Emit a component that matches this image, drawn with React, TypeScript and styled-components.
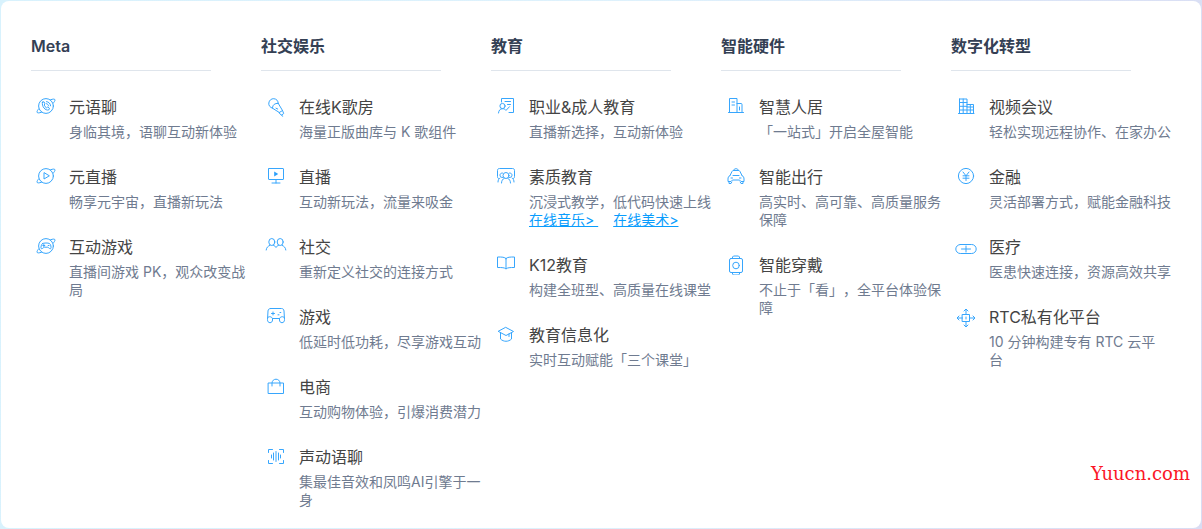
import React from "react";
import styled, { createGlobalStyle } from "styled-components";

const GlobalStyle = createGlobalStyle`
  *, *::before, *::after { box-sizing: border-box; }
  body {
    margin: 0;
    font-family: Inter, "Noto Sans CJK SC", sans-serif;
    text-spacing-trim: space-all;
    background: linear-gradient(100deg, #d8f2fd 0%, #def1fc 50%, #d9dcf3 100%);
  }
`;

const Page = styled.main`
  min-height: 100vh;
  padding: 1px;
  display: flex;
`;

const Panel = styled.nav`
  position: relative;
  flex: 1;
  display: grid;
  grid-template-columns: repeat(5, minmax(0, 230px));
  align-items: start;
  padding: 33px 20px 19px 30px;
  background: #fff;
  border-radius: 8px;
`;

const Column = styled.section`
  min-width: 0;
`;

const Heading = styled.h2`
  width: 180px;
  margin: 0 0 24px;
  padding-bottom: 12px;
  border-bottom: 1px solid #dfe5ec;
  color: #344054;
  font-size: 16px;
  line-height: 24px;
  font-weight: 600;
`;

const List = styled.ul`
  display: flex;
  flex-direction: column;
  gap: 24px;
  margin: 0;
  padding: 0 0 0 4px;
  list-style: none;
`;

const Item = styled.li`
  display: flex;
  gap: 12px;
`;

const Icon = styled.svg`
  flex: none;
  width: 22px;
  height: 22px;
  fill: none;
  stroke: #37a6fd;
  stroke-width: 1;
  stroke-linecap: round;
  stroke-linejoin: round;
`;

const Body = styled.div`
  min-width: 0;
  white-space: nowrap;
`;

const Title = styled.h3`
  margin: 0 0 4px;
  color: #444;
  font-size: 16px;
  line-height: 24px;
  font-weight: 400;
`;

const Description = styled.p`
  margin: 0;
  color: #6f7b90;
  font-size: 14px;
  line-height: 18px;
`;

const Links = styled.div`
  display: flex;
  gap: 15px;
  font-size: 14px;
  line-height: 18px;
`;

const TextLink = styled.a`
  color: #099dfd;
  white-space: pre;
  text-decoration: underline;
`;

const Watermark = styled.span`
  position: absolute;
  right: 11px;
  bottom: 42px;
  color: #fb1626;
  font-family: "DejaVu Serif", serif;
  font-size: 18px;
  line-height: 24px;
`;

const Orbit = () => (
  <>
    <circle cx="11" cy="11" r="7.4" />
    <path d="M15.5 4.8C18 3.8 20 3.8 20 5c0 .9-.7 2-2 3.300M6.500 17.200C4 18.200 2 18.200 2 17c0-.9.6-2 1.800-3.200" />
  </>
);

const icons: Record<string, React.ReactNode> = {
  voice: (
    <>
      <Orbit />
      <path d="M7.5 7.2 9 6.8l1 2.1-.9 1.1c.4 1.2 1.2 2.1 2.4 2.8l1.2-.8 1.8 1.3-.7 1.6c-3.4 1-7.5-3.4-6.3-7.7zM11.5 8.7c1.1.2 1.9 1 2.1 2.2M11.5 6.6c2.3.2 3.9 1.9 4.1 4.2" />
    </>
  ),
  metaLive: (
    <>
      <Orbit />
      <path d="M9 8v6l5-3z" />
    </>
  ),
  metaGame: (
    <>
      <Orbit />
      <path d="M7.5 8.5c1.500-.7 5.500-.7 7 0 1.200.7 2 4 1.300 5-.8 1-2-.9-3-1.300H9.200c-1 .4-2.200 2.300-3 1.300-.7-1 .1-4.300 1.300-5zM7.800 10.500h2M8.800 9.500v2M13.200 10.500h.8" />
    </>
  ),
  karaoke: (
    <>
      <path d="M7.5 13.200C5 12.500 3.500 10.500 3.800 8c.4-2.700 2.600-4.500 5-4.300 2.700.2 4.500 2.200 4.400 4.600" />
      <path d="m13.200 8.300 4.300 7.200M7.500 13.200l6.800 4.300M7.500 12.500c.2-2.800 2.200-4.200 5.500-4.200M11 13.200l1.700.8M14.300 17.500l3.200-2 1.200 3-2 1.500zM16.700 20l.8 1.300" />
    </>
  ),
  live: (
    <>
      <rect x="3.500" y="3.500" width="15" height="11" rx=".5" />
      <path d="M11 14.500v3.500M7 18h8" />
      <path d="M9.200 6.500v5l4-2.500z" fill="#2b9ffb" stroke="none" />
    </>
  ),
  social: (
    <>
      <ellipse cx="6.800" cy="7" rx="3" ry="3.500" />
      <ellipse cx="15.200" cy="7" rx="3" ry="3.500" />
      <path d="M1.200 15c.2-2.500 1.700-3.800 3.800-4.700M8.500 10.300c1.100.4 1.900 1.100 2.500 2.200.6-1.100 1.400-1.800 2.500-2.200M17 10.300c2.100.9 3.600 2.200 3.800 4.700" />
    </>
  ),
  game: (
    <>
      <path d="M5.500 3.500h11c1.500 0 2.400 1 2.500 2.500l.5 8.500c.1 2-1 3.200-2.500 3.200s-2.500-1.100-2.500-2.700v-1.500h-7V15c0 1.600-1 2.700-2.500 2.700s-2.600-1.200-2.500-3.200L3 6c.1-1.500 1-2.500 2.500-2.500z" />
      <path d="M2.800 12.500c.7-1.300 4-1.300 4.700 1M14.500 13.500c.7-2.300 4-2.300 4.700-1M6.500 8.500h3M8 7v3M13 9.800h1M15 7.500h.8" />
    </>
  ),
  shop: (
    <>
      <path d="M3.500 8h15v10.500h-15z" />
      <path d="M7 11V8c.2-2.400 1.900-3.800 4-3.800S14.800 5.600 15 8v3" />
    </>
  ),
  sound: (
    <path d="M3.500 7.500v-3h4M14.500 4.500h4v3M18.500 15.500v3h-4M7.500 18.500h-4v-3M6.500 10v3M8.500 8v7M11 6.500v10M13.500 8v7M15.500 10v3" />
  ),
  career: (
    <>
      <path d="M6.500 7V3.500h12v14H14M10 6.500h5.500M12.500 9.500h3" />
      <circle cx="7.500" cy="11" r="2.600" />
      <path d="M3.500 18c.2-2.500 1.600-4.300 4-4.300 1.700 0 2.700.6 3.500 1.700l3.500-3.700" />
    </>
  ),
  quality: (
    <>
      <path d="M3.500 13.500c-.8-.3-1-1-1-2V5.500c0-1.300.7-2 2-2h13c1.300 0 2 .7 2 2v6c0 1-.2 1.700-1 2" />
      <circle cx="11" cy="10.500" r="3" />
      <path d="M7.800 12.500c-1.500.2-2.800-.8-2.800-2.300 0-1.400 1-2.300 2.500-2.200M14.200 12.500c1.500.2 2.800-.8 2.800-2.300 0-1.400-1-2.300-2.500-2.200M6.500 18c0-2.200 1-3.800 2.800-4.800M15.500 18c0-2.200-1-3.800-2.800-4.800M3 17c0-1.800.6-3.200 2-4M19 17c0-1.800-.6-3.200-2-4" />
    </>
  ),
  book: (
    <path d="M11 5.500C9.500 4 7 4 2.500 4v10.500c4.500 0 7 0 8.500 1.500 1.500-1.500 4-1.500 8.500-1.500V4C15 4 12.500 4 11 5.500zM11 5.500v10" />
  ),
  cap: (
    <path d="m11 4.500 7.500 4-7.500 4-7.500-4zM5.500 9.800v6.200c3.200 3 7.800 3 11 0V9.800M14 11v2.500" />
  ),
  home: (
    <path d="M3.500 17.500h15M4.500 17.500v-14h7.500v14M12 8.500h4c.7 0 1 .3 1 1v8M7 7h2.500M7 10h2.500M14.500 12v3" />
  ),
  car: (
    <path d="M8.500 5.500c0-2.500 5-2.500 5 0M5 10.500l2-4c.4-.7.8-1 1.500-1h5c.7 0 1.100.3 1.500 1l2 4M8 10.500h6M5 10.500c-1.500.8-2 2-2 3.500v2.500h3l1.500-1.500h7l1.500 1.500h3V14c0-1.500-.5-2.700-2-3.500M4 16.500v2h2l.8-1.500M18 16.500v2h-2l-.8-1.500M6 13h1.500M14.500 13H16" />
  ),
  watch: (
    <>
      <rect x="4.500" y="5.500" width="13" height="14" rx="1.500" />
      <circle cx="11" cy="12.500" r="3.300" />
      <path d="M7.500 5.500V4l1-1h5l1 1v1.500M7.500 19.500V21l1 1h5l1-1v-1.500" />
    </>
  ),
  meeting: (
    <path d="M4.500 4h7.500v14.500M4.500 4v14.500h14V9.500H12M4.500 7.500H12M4.500 11.300H12M4.500 15h14M8.200 4v14.500M12 12h6.500M15.300 9.500v9M3.500 18.500h15.500" />
  ),
  finance: (
    <>
      <circle cx="11" cy="11" r="7.600" />
      <path d="m8 7 3 3.800L14 7M11 10.800v4.700M8 10.800h6M8 13.200h6" />
    </>
  ),
  medical: (
    <>
      <rect x=".8" y="9.500" width="20.400" height="9" rx="4.500" />
      <path d="M11 11v6M6.500 14h9" />
    </>
  ),
  platform: (
    <>
      <rect x="7.500" y="9.500" width="7" height="7" />
      <path d="M11 9.500v-5M9 6l2-2 2 2M11 16.500v5M9 20l2 2 2-2M7.500 13h-5M4 11l-2 2 2 2M14.500 13h5M18 11l2 2-2 2M11 12v2" />
    </>
  ),
};

type Entry = { icon: string; title: string; lines: string[]; links?: string[] };

const columns: { heading: string; items: Entry[] }[] = [
  {
    heading: "Meta",
    items: [
      { icon: "voice", title: "元语聊", lines: ["身临其境，语聊互动新体验"] },
      { icon: "metaLive", title: "元直播", lines: ["畅享元宇宙，直播新玩法"] },
      { icon: "metaGame", title: "互动游戏", lines: ["直播间游戏 PK，观众改变战", "局"] },
    ],
  },
  {
    heading: "社交娱乐",
    items: [
      { icon: "karaoke", title: "在线K歌房", lines: ["海量正版曲库与 K 歌组件"] },
      { icon: "live", title: "直播", lines: ["互动新玩法，流量来吸金"] },
      { icon: "social", title: "社交", lines: ["重新定义社交的连接方式"] },
      { icon: "game", title: "游戏", lines: ["低延时低功耗，尽享游戏互动"] },
      { icon: "shop", title: "电商", lines: ["互动购物体验，引爆消费潜力"] },
      { icon: "sound", title: "声动语聊", lines: ["集最佳音效和凤鸣AI引擎于一", "身"] },
    ],
  },
  {
    heading: "教育",
    items: [
      { icon: "career", title: "职业&成人教育", lines: ["直播新选择，互动新体验"] },
      {
        icon: "quality",
        title: "素质教育",
        lines: ["沉浸式教学，低代码快速上线"],
        links: ["在线音乐> ", "在线美术>"],
      },
      { icon: "book", title: "K12教育", lines: ["构建全班型、高质量在线课堂"] },
      { icon: "cap", title: "教育信息化", lines: ["实时互动赋能「三个课堂」"] },
    ],
  },
  {
    heading: "智能硬件",
    items: [
      { icon: "home", title: "智慧人居", lines: ["「一站式」开启全屋智能"] },
      { icon: "car", title: "智能出行", lines: ["高实时、高可靠、高质量服务", "保障"] },
      { icon: "watch", title: "智能穿戴", lines: ["不止于「看」，全平台体验保", "障"] },
    ],
  },
  {
    heading: "数字化转型",
    items: [
      { icon: "meeting", title: "视频会议", lines: ["轻松实现远程协作、在家办公"] },
      { icon: "finance", title: "金融", lines: ["灵活部署方式，赋能金融科技"] },
      { icon: "medical", title: "医疗", lines: ["医患快速连接，资源高效共享"] },
      { icon: "platform", title: "RTC私有化平台", lines: ["10 分钟构建专有 RTC 云平", "台"] },
    ],
  },
];

export default function App() {
  return (
    <>
      <GlobalStyle />
      <Page>
        <Panel lang="zh-CN">
          {columns.map((column) => (
            <Column key={column.heading}>
              <Heading>{column.heading}</Heading>
              <List>
                {column.items.map((item) => (
                  <Item key={item.title}>
                    <Icon viewBox="0 0 22 22" aria-hidden="true">
                      {icons[item.icon]}
                    </Icon>
                    <Body>
                      <Title>{item.title}</Title>
                      <Description>
                        {item.lines.map((line, i) => (
                          <React.Fragment key={line}>
                            {i > 0 && <br />}
                            {line}
                          </React.Fragment>
                        ))}
                      </Description>
                      {item.links && (
                        <Links>
                          {item.links.map((link) => (
                            <TextLink key={link} href="#">
                              {link}
                            </TextLink>
                          ))}
                        </Links>
                      )}
                    </Body>
                  </Item>
                ))}
              </List>
            </Column>
          ))}
          <Watermark>Yuucn.com</Watermark>
        </Panel>
      </Page>
    </>
  );
}
